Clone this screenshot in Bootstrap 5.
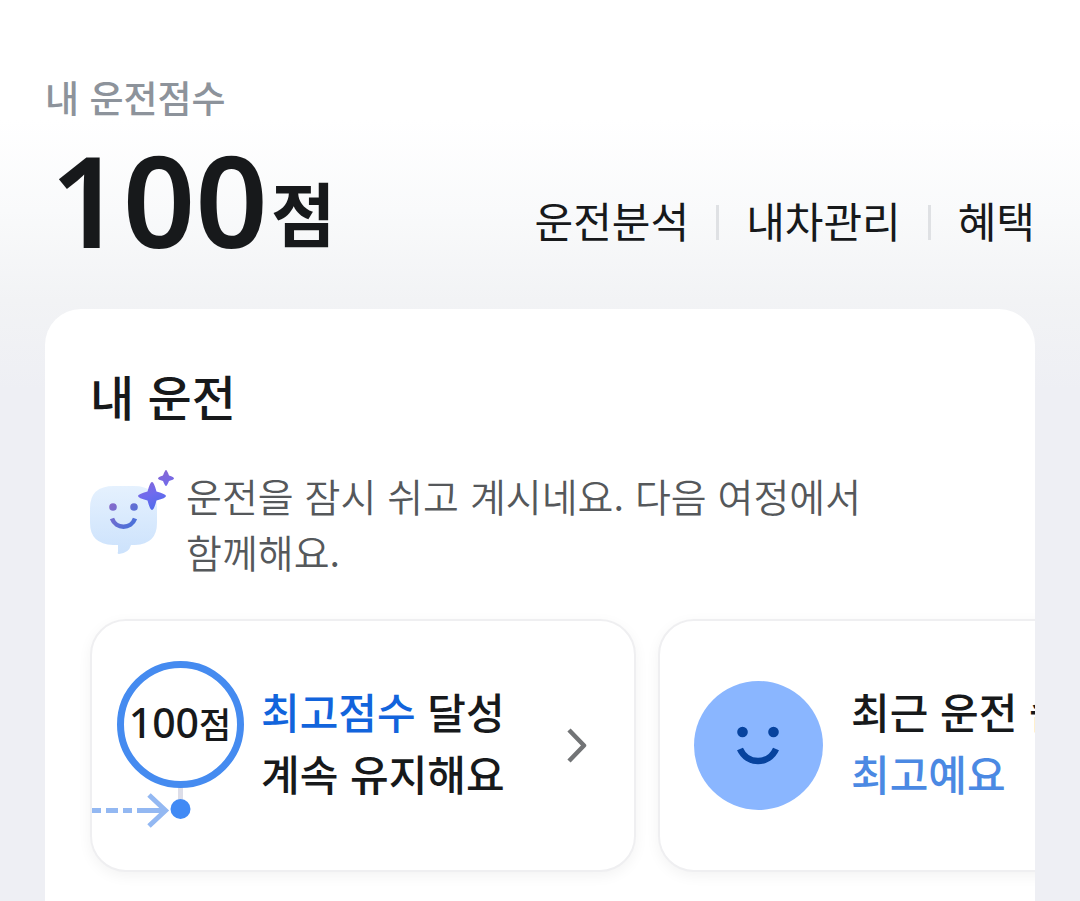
<!DOCTYPE html>
<html lang="ko">
<head>
<meta charset="utf-8">
<meta name="viewport" content="width=device-width, initial-scale=1">
<title>내 운전점수</title>
<link href="https://cdn.jsdelivr.net/npm/bootstrap@5.3.0/dist/css/bootstrap.min.css" rel="stylesheet">
<style>
  body {
    font-family: "Noto Sans CJK KR", sans-serif;
    color: #17191b;
    background: #eeeff4 linear-gradient(#fff 120px, #f9fafb 210px, #f2f3f5 300px, #eeeff4 390px) no-repeat;
    word-break: keep-all;
    overflow-x: hidden;
  }
  .score-page { padding: 70px 45px 0; }
  .score-label { font-size: 37px; line-height: 54px; font-weight: 500; color: #8d939b; }
  .score-row { height: 149px; margin-bottom: 36px; }
  .score-value { font-family: "Noto Sans", "Noto Sans CJK KR", sans-serif; font-size: 127px; line-height: 149px; font-weight: 600; padding-left: 5px; }
  .score-unit { font-size: 70px; font-weight: 700; vertical-align: 6px; line-height: 1; margin-left: 3px; }
  .menu-links { font-size: 42px; line-height: 62px; gap: 27px; padding-top: 42px; }
  .menu-links a { color: inherit; text-decoration: none; }
  .menu-links .vr { width: 3px; height: 35px; min-height: 0; margin-top: 6px; background: #dfe1e4; opacity: 1; }
  .drive-panel { background: #fff; border-radius: 36px 36px 0 0; padding: 51px 45px 0; min-height: 592px; overflow: hidden; }
  .drive-panel h2 { font-size: 48px; line-height: 70px; font-weight: 500; margin: 0 0 37px; }
  .notice { font-size: 39px; line-height: 56px; color: #55585b; font-weight: 350; gap: 12px; margin-bottom: 26px; }
  .notice svg { margin-top: 3px; }
  .tiles { gap: 22px; margin: 0 -45px 0 -20px; padding: 14px 0 30px 20px; overflow: hidden; }
  .tile { flex: 0 0 546px; height: 253px; border: 2px solid #efeff1; border-radius: 36px; background: #fff; box-shadow: 0 4px 14px rgba(0,0,0,.05); color: inherit; text-decoration: none; font-size: 42px; line-height: 62px; font-weight: 500; white-space: nowrap; overflow: hidden; }
  .tile-text { padding-bottom: 8px; }
  .tile-score { gap: 16px; padding-right: 47px; }
  .tile-recent { gap: 28px; padding-left: 34px; }
  .ring-text { font-family: "Noto Sans", "Noto Sans CJK KR", sans-serif; font-size: 41px; font-weight: 500; fill: #17191b; }
  .ring-unit { font-size: 35px; }
  .text-best { color: #1264dc; }
  .text-great { color: #4b89e3; }
</style>
</head>
<body>
<div class="score-page">
  <header>
    <div class="score-label">내 운전점수</div>
    <div class="score-row d-flex justify-content-between">
      <div class="score-value text-nowrap">100<span class="score-unit">점</span></div>
      <nav class="menu-links d-flex align-items-center text-nowrap">
        <a href="#">운전분석</a><span class="vr align-self-center"></span>
        <a href="#">내차관리</a><span class="vr align-self-center"></span>
        <a href="#">혜택</a>
      </nav>
    </div>
  </header>
  <main class="drive-panel">
    <h2>내 운전</h2>
    <div class="notice d-flex align-items-start">
      <svg class="flex-shrink-0" width="84" height="86" viewBox="0 0 84 86" aria-hidden="true">
        <defs>
          <linearGradient id="bubble" x1="0" y1="0" x2="0" y2="1"><stop stop-color="#e5f1fe"/><stop offset="1" stop-color="#cce2fc"/></linearGradient>
          <linearGradient id="spark" gradientUnits="userSpaceOnUse" x1="55" y1="5" x2="70" y2="42"><stop stop-color="#8b66cf"/><stop offset=".5" stop-color="#6f6bee"/><stop offset="1" stop-color="#476bea"/></linearGradient>
          <linearGradient id="face" gradientUnits="userSpaceOnUse" x1="18" y1="32" x2="48" y2="58"><stop stop-color="#8c69c9"/><stop offset="1" stop-color="#3f72dc"/></linearGradient>
        </defs>
        <path fill="url(#bubble)" d="M24 16H44Q67 16 67 38V53Q67 74 45 75H41Q39 83 29 84Q27 84 28 82V75H23Q0 74 0 53V38Q0 16 24 16Z"/>
        <g fill="url(#face)"><circle cx="23" cy="37" r="3.8"/><circle cx="44" cy="37" r="3.8"/></g>
        <path d="M22 48.500C26 59.500 41 59.500 45 48.500" fill="none" stroke="url(#face)" stroke-width="4.500"/>
        <path fill="url(#spark)" d="M62 12Q64 12 66.500 21.500Q76 24 76 26Q76 28 66.500 30.500Q64 40 62 40Q60 40 57.500 30.500Q48 28 48 26Q48 24 57.500 21.500Q60 12 62 12ZM76 0Q77 0 79 5.500Q84 7 84 8.500Q84 9.500 79 11Q77 16 76 16Q75 16 73 11Q68 9.500 68 8.500Q68 7 73 5.500Q75 0 76 0Z"/>
      </svg>
      <div>운전을 잠시 쉬고 계시네요. 다음 여정에서 함께해요.</div>
    </div>
    <div class="tiles d-flex">
      <a href="#" class="tile tile-score d-flex align-items-center">
        <svg class="flex-shrink-0" width="153" height="249" viewBox="0 0 153 249">
          <path d="M88.500 164V180" stroke="#dcdde8" stroke-width="5"/>
          <path d="M0 189.500H9M14 189.500H26M31 189.500H40M45 189.500H74M57 174L73.500 189.500L57 205" fill="none" stroke="#93b8f2" stroke-width="5"/>
          <circle cx="88.500" cy="188" r="10" fill="#418af5"/>
          <circle cx="88.500" cy="103.500" r="60" fill="#fff" stroke="#458bf0" stroke-width="7"/>
          <text class="ring-text" x="88" y="117" text-anchor="middle">100<tspan class="ring-unit">점</tspan></text>
        </svg>
        <span class="tile-text"><span class="text-best">최고점수</span> 달성<br>계속 유지해요</span>
        <svg class="flex-shrink-0 ms-auto" width="20" height="36" viewBox="0 0 20 36" fill="none" stroke="#727476" stroke-width="4.500" stroke-linejoin="round" aria-hidden="true"><path d="M2 2L17 17.500L2 33"/></svg>
      </a>
      <a href="#" class="tile tile-recent d-flex align-items-center">
        <svg class="flex-shrink-0" width="129" height="129" viewBox="0 0 129 129" aria-hidden="true">
          <circle cx="64.500" cy="64.500" r="64.500" fill="#8ab6ff"/>
          <circle cx="48.500" cy="51" r="5.300" fill="#07439e"/><circle cx="79.500" cy="51" r="5.300" fill="#07439e"/>
          <path d="M46 68C53 84 75 84 82 68" fill="none" stroke="#07439e" stroke-width="6.500"/>
        </svg>
        <span class="tile-text">최근 운전 습관<br><span class="text-great">최고예요</span></span>
      </a>
    </div>
  </main>
</div>
<script src="https://cdn.jsdelivr.net/npm/bootstrap@5.3.0/dist/js/bootstrap.bundle.min.js"></script>
</body>
</html>
